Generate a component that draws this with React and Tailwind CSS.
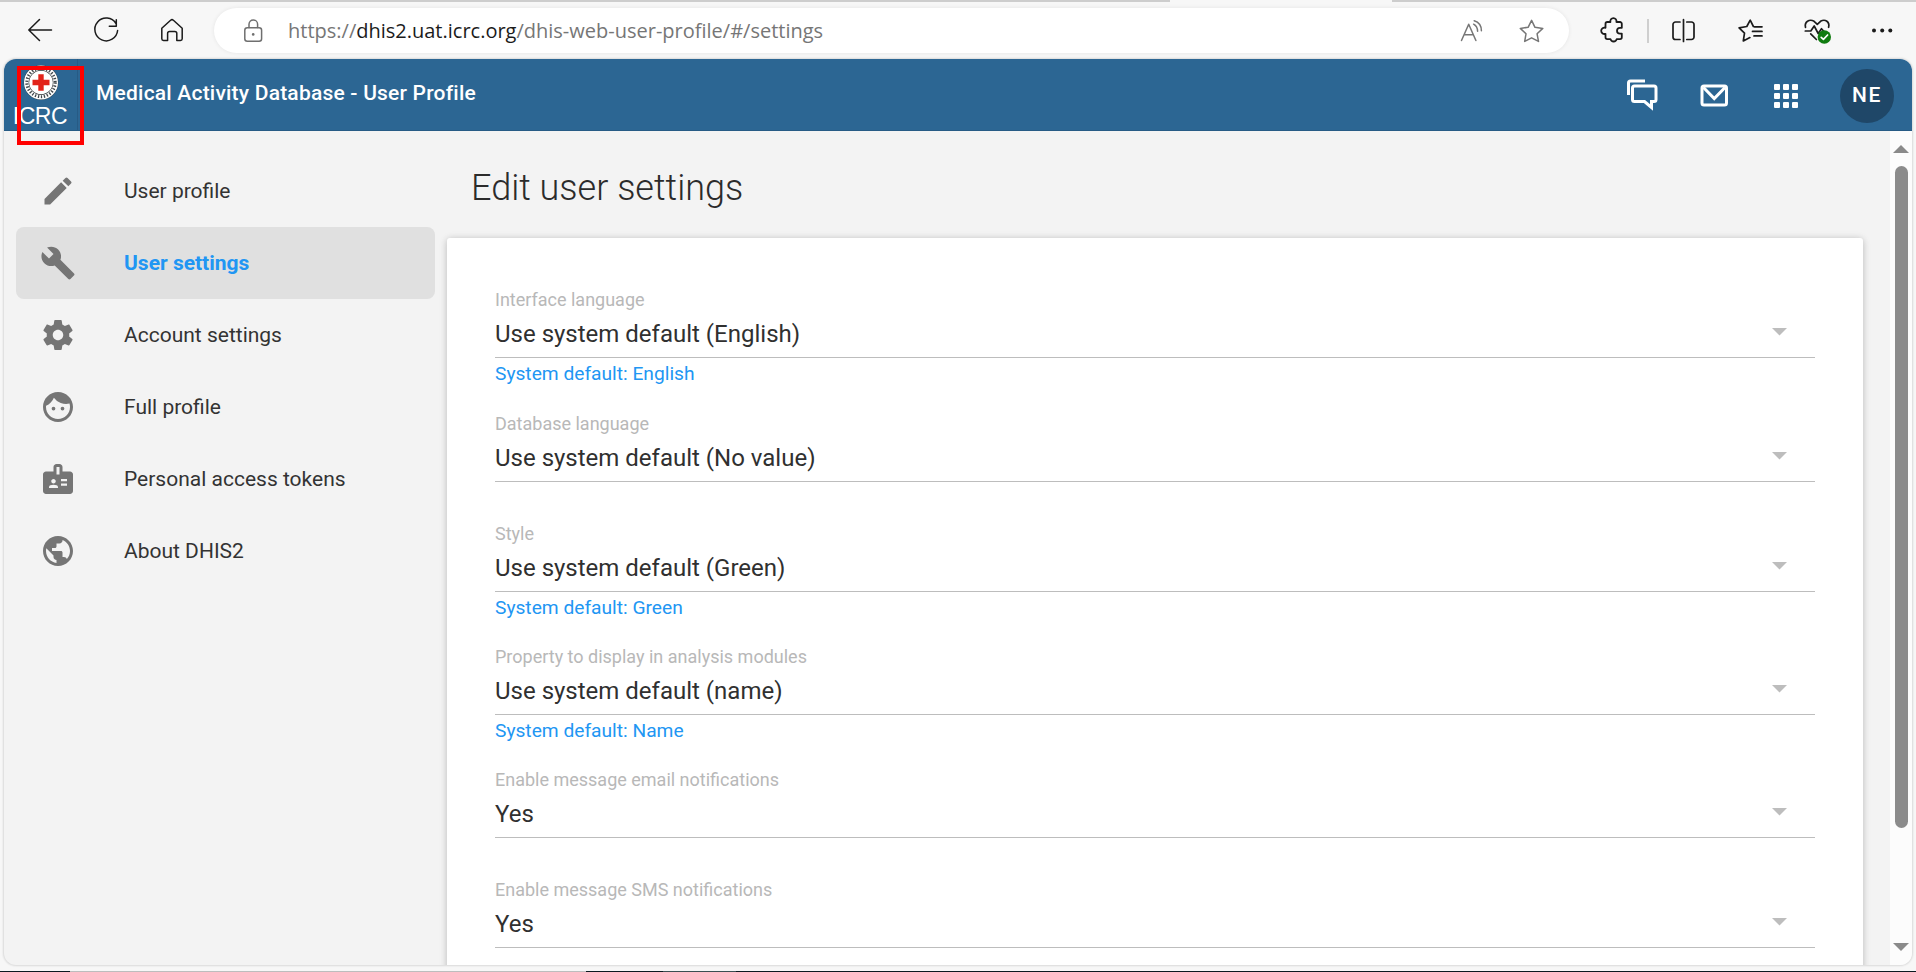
import React from "react";
import { MdEdit, MdBuild, MdFace, MdPublic } from "react-icons/md";

const Gear = (props) => (
  <svg viewBox="0 0 24 24" fill="currentColor" {...props}>
    <path d="M19.43 12.98c.04-.32.07-.64.07-.98s-.03-.66-.07-.98l2.11-1.65c.19-.15.24-.42.12-.64l-2-3.46c-.12-.22-.39-.3-.61-.22l-2.49 1c-.52-.4-1.08-.73-1.69-.98l-.38-2.65C14.46 2.18 14.25 2 14 2h-4c-.25 0-.46.18-.49.42l-.38 2.65c-.61.25-1.17.59-1.69.98l-2.49-1c-.23-.09-.49 0-.61.22l-2 3.46c-.13.22-.07.49.12.64l2.11 1.65c-.04.32-.07.65-.07.98s.03.66.07.98l-2.11 1.65c-.19.15-.24.42-.12.64l2 3.46c.12.22.39.3.61.22l2.49-1c.52.4 1.08.73 1.69.98l.38 2.65c.03.24.24.42.49.42h4c.25 0 .46-.18.49-.42l.38-2.65c.61-.25 1.17-.59 1.69-.98l2.49 1c.23.09.49 0 .61-.22l2-3.46c.12-.22.07-.49-.12-.64l-2.11-1.65zM12 15.5c-1.93 0-3.5-1.57-3.5-3.5s1.57-3.5 3.5-3.5 3.5 1.57 3.5 3.5-1.57 3.5-3.5 3.5z" />
  </svg>
);

const Badge = (props) => (
  <svg viewBox="0 0 24 24" fill="currentColor" {...props}>
    <path d="M20 7h-5V4c0-1.1-.9-2-2-2h-2c-1.1 0-2 .9-2 2v3H4c-1.1 0-2 .9-2 2v11c0 1.1.9 2 2 2h16c1.1 0 2-.9 2-2V9c0-1.1-.9-2-2-2zM9 12c.83 0 1.5.67 1.5 1.5S9.83 15 9 15s-1.5-.67-1.5-1.5S8.17 12 9 12zm3 6H6v-.43c0-.6.36-1.15.92-1.39.65-.28 1.34-.43 2.08-.43s1.43.15 2.08.43c.55.24.92.78.92 1.39V18zm1-9h-2V4h2v5zm5 7.5h-4V15h4v1.5zm0-3h-4V12h4v1.5z" />
  </svg>
);

const Line = ({ w = 30, children, className = "", sw = 1.5 }) => (
  <svg
    width={w}
    height="30"
    viewBox={`0 0 ${w} 30`}
    fill="none"
    stroke="currentColor"
    strokeWidth={sw}
    strokeLinecap="round"
    strokeLinejoin="round"
    className={`shrink-0 ${className}`}
  >
    {children}
  </svg>
);

function BrowserBar() {
  return (
    <div className="flex h-[57px] shrink-0 items-start pt-[6px] text-[#1b1b1b]">
      <Line className="ml-[25px] mt-[7px]">
        <path d="M26.500 15H3.800M14.500 4.500L3.800 15l10.700 10.500" />
      </Line>
      <Line className="ml-[36px] mt-[8px]">
        <path d="M25 7.500A11.400 11.400 0 1 0 26.600 14.500M25.300 3.700v6.500h-7" />
      </Line>
      <Line className="ml-[36px] mt-[7px]">
        <path d="M4.800 13.200L13.600 5.300a2 2 0 0 1 2.800 0l8.800 7.900v10.600a1.700 1.700 0 0 1-1.700 1.700h-3.700v-7a2 2 0 0 0-2-2h-5.200a2 2 0 0 0-2 2v7H6.500a1.700 1.700 0 0 1-1.700-1.700z" />
      </Line>
      <div className="ml-[27px] flex h-[45px] w-[1355px] items-center rounded-full bg-white shadow-[0_0_4px_rgba(0,0,0,0.08)]">
        <Line className="ml-[24px] text-[#6f6f6f]">
          <rect x="6.800" y="11.700" width="16.800" height="13.600" rx="2.500" />
          <path d="M11 11.500V8.300a4.300 4.300 0 0 1 8.600 0v3.200" />
          <circle cx="15.200" cy="18.400" r="1.300" fill="currentColor" stroke="none" />
        </Line>
        <span className="ml-[20px] w-[540px] whitespace-nowrap font-['Open_Sans',sans-serif] text-[20px] text-[#767676]">
          https://<span className="text-[#1b1b1b]">dhis2.uat.icrc.org</span>/dhis-web-user-profile/#/settings
        </span>
        <Line className="ml-[629px] text-[#767676]">
          <path d="M4.500 24.500L11.700 8.200l7.200 16.300M7.300 18.700h9M16.600 8.200c2.500 1.400 3.900 3.900 4 7M17.200 4.700c4.500 1.400 7.200 5.200 7.200 10" />
        </Line>
        <Line className="ml-[30px] text-[#767676]">
          <path d="M14.600 4.300l3.400 7 7.800 1.100-5.700 5.400 1.400 7.600-6.900-3.600-6.900 3.600L9 17.800l-5.700-5.400 7.800-1.100z" />
        </Line>
      </div>
      <Line className="ml-[28px] mt-[7px]" sw={1.8}>
        <path d="M10.300 7h3.100a3.100 3.100 0 1 1 6 0h3.600a1.800 1.800 0 0 1 1.800 1.800v4h-1.900a2.900 2.900 0 0 0 0 5.800h1.900v3.700a1.800 1.800 0 0 1-1.800 1.800h-3.300a3.200 3.200 0 0 1-6.200 0h-3.200a1.800 1.800 0 0 1-1.800-1.800v-3.500a3.200 3.200 0 1 1 0-6V8.800a1.800 1.800 0 0 1 1.800-1.800z" />
      </Line>
      <div className="ml-[20px] mt-[11px] h-[24px] w-[2px] bg-[#cfcfcf]" />
      <Line className="ml-[19px] mt-[7px]" sw={1.7}>
        <path d="M12 7H7.500A2.500 2.500 0 0 0 5 9.500v12.500A2.500 2.500 0 0 0 7.500 24.500H12M18.800 7H23.500A2.500 2.500 0 0 1 26 9.500v12.500a2.500 2.500 0 0 1-2.500 2.500h-4.700M15.500 4.700v21.800" />
      </Line>
      <Line className="ml-[37px] mt-[7px]" sw={1.7}>
        <path d="M21.600 12l-3.200-.5L15.200 5.200l-3.400 6.300-7.700 1.300 5.400 5.300-1.200 7.800 6.600-3.300M19 11.800h8M17.500 16.400h9.500M19 20.900h8" />
      </Line>
      <Line className="ml-[37px] mt-[7px]" sw={1.7}>
        <path d="M3.500 12.300c-1.300-5.300 3.800-8.800 8.600-6l3.200 3 3.200-3c4.800-2.800 9.500.7 8.100 6M3.300 16h5.500l3.400-5 4 7.500 3.300-4.800 2 2.300M8.700 18.800l5.700 5.700" />
        <circle cx="22.300" cy="22" r="6.700" fill="#107c10" stroke="none" />
        <path d="M19.200 22.300l2.200 2 4.200-4.300" stroke="#fff" />
      </Line>
      <Line className="ml-[35px] mt-[7px]">
        <g fill="currentColor" stroke="none">
          <circle cx="7" cy="15.600" r="2" />
          <circle cx="15.200" cy="15.600" r="2" />
          <circle cx="23.300" cy="15.600" r="2" />
        </g>
      </Line>
    </div>
  );
}

function Logo() {
  return (
    <div className="relative h-full w-[74px] shrink-0 border-r border-[#275b85]">
      <svg width="73" height="72" viewBox="0 0 73 72" className="block">
        <circle cx="37" cy="23.500" r="17.300" fill="#2f3437" />
        <circle cx="37" cy="23.500" r="14.700" fill="none" stroke="#fff" strokeWidth="4.600" />
        <circle cx="37" cy="23.500" r="14.200" fill="none" stroke="#41474b" strokeWidth="3" strokeDasharray="1.300 1.700" />
        <circle cx="37" cy="23.500" r="11.800" fill="#fff" />
        <path d="M34.300 15.200h5.400v5.600h5.800v5.400h-5.800v5.600h-5.400v-5.600h-5.800v-5.400h5.800z" fill="#e2231a" />
        <text x="8.700" y="65" fontSize="23" textLength="55" fill="#fff" className="font-['Liberation_Sans',sans-serif]">
          ICRC
        </text>
      </svg>
      <div className="absolute left-[13px] top-[7px] z-10 h-[79px] w-[67px] border-4 border-[#ff0000]" />
    </div>
  );
}

function HeaderBar() {
  return (
    <header className="flex h-[72px] shrink-0 items-center bg-[#2c6693] text-white shadow-[inset_0_-1px_0_#275b85]">
      <Logo />
      <h1 className="ml-[18px] mb-[2px] whitespace-nowrap text-[21px] font-medium tracking-[0.21px]">
        Medical Activity Database - User Profile
      </h1>
      <div className="ml-auto flex items-center pt-[2px]">
        <svg width="36" height="36" viewBox="0 0 36 36" fill="none" stroke="#fff" strokeWidth="3">
          <path d="M4.500 17V5a2 2 0 0 1 2-2H21" />
          <path d="M10.500 8h19.500a2 2 0 0 1 2 2v11.500a2 2 0 0 1-2 2h-2.500v6l-7-6H10.500a2 2 0 0 1-2-2V10a2 2 0 0 1 2-2z" />
        </svg>
        <svg width="36" height="36" viewBox="0 0 36 36" fill="none" stroke="#fff" strokeWidth="3" className="ml-[36px]">
          <rect x="6" y="8" width="24.500" height="19" rx="2" />
          <path d="M7.500 9.500L18.250 20.500 29 9.500" />
        </svg>
        <svg width="36" height="36" viewBox="0 0 36 36" fill="#fff" className="ml-[36px]">
          {[6, 15, 24].map((y) =>
            [6, 15, 24].map((x) => <rect key={`${x}-${y}`} x={x} y={y} width="6" height="6" rx="1" />)
          )}
        </svg>
        <div className="ml-[36px] mr-[18px] flex size-[54px] items-center justify-center rounded-full bg-[#1f4768] text-[21px] font-medium tracking-[1.5px]">
          NE
        </div>
      </div>
    </header>
  );
}

const items = [
  { label: "User profile", Icon: MdEdit },
  { label: "User settings", Icon: MdBuild, active: true },
  { label: "Account settings", Icon: Gear },
  { label: "Full profile", Icon: MdFace },
  { label: "Personal access tokens", Icon: Badge },
  { label: "About DHIS2", Icon: MdPublic },
];

function Sidebar() {
  return (
    <nav className="w-[431px] shrink-0 pl-[12px] pt-[24px]">
      {items.map(({ label, Icon, active }) => (
        <div
          key={label}
          className={`flex h-[72px] items-center rounded-[8px] pl-[24px] ${active ? "bg-[#e0e0e0]" : ""}`}
        >
          <Icon className="size-[36px] text-[#757575]" />
          <span
            className={`ml-[48px] pt-[1px] text-[21px] ${active ? "font-bold text-[#2196f3]" : "font-normal text-[#333]"}`}
          >
            {label}
          </span>
        </div>
      ))}
    </nav>
  );
}

function Field({ label, value, hint }) {
  return (
    <div className={hint ? "h-[123.3px]" : "h-[110px]"}>
      <div className="h-[72px] border-b border-[#bdbdbd]">
        <div className="h-[27px] text-[18px] leading-[27px] text-[#b8b8b8]">{label}</div>
        <div className="flex h-[42px] items-center justify-between">
          <span className="text-[24px] text-[#303030]">{value}</span>
          <svg width="15" height="8" viewBox="0 0 15 8" className="mb-[4px] mr-[28px]">
            <path d="M0 0h15L7.500 7.500z" fill="#bdbdbd" />
          </svg>
        </div>
      </div>
      {hint && <div className="pt-[2px] text-[19.2px] leading-[27px] text-[#2196f3]">{hint}</div>}
    </div>
  );
}

function Settings() {
  return (
    <main className="flex min-w-0 flex-1 flex-col pl-[12px] pr-[27px]">
      <h2 className="h-[107px] shrink-0 pl-[24px] pt-[30px] text-[36px] font-light leading-[54px] text-[#2b2b2b]">
        Edit user settings
      </h2>
      <div className="flex-1 rounded-t-[3px] bg-white px-[48px] pt-[48.25px] shadow-[0_1px_9px_rgba(0,0,0,0.12),0_1px_6px_rgba(0,0,0,0.12)]">
        <Field label="Interface language" value="Use system default (English)" hint="System default: English" />
        <Field label="Database language" value="Use system default (No value)" />
        <Field label="Style" value="Use system default (Green)" hint="System default: Green" />
        <Field label="Property to display in analysis modules" value="Use system default (name)" hint="System default: Name" />
        <Field label="Enable message email notifications" value="Yes" />
        <Field label="Enable message SMS notifications" value="Yes" />
      </div>
    </main>
  );
}

function Scrollbar() {
  return (
    <div className="flex w-[22px] shrink-0 flex-col items-center bg-[#fcfcfc]">
      <svg width="16" height="8" viewBox="0 0 16 8" className="mt-[14px] shrink-0">
        <path d="M0 8h16L8 0z" fill="#8a8a8a" />
      </svg>
      <div className="mt-[13px] h-[662px] w-[13px] shrink-0 rounded-full bg-[#8b8b8b]" />
      <svg width="16" height="8" viewBox="0 0 16 8" className="mb-[14px] mt-auto shrink-0">
        <path d="M0 0h16L8 8z" fill="#8a8a8a" />
      </svg>
    </div>
  );
}

export default function App() {
  return (
    <div className="flex h-[972px] w-[1916px] flex-col overflow-hidden bg-[#f7f7f7] font-['Roboto',sans-serif]">
      <div className="flex h-[2px] shrink-0">
        <div className="w-[1170px] bg-[#cdcdcd]" />
        <div className="w-[222px]" />
        <div className="flex-1 bg-[#cdcdcd]" />
      </div>
      <BrowserBar />
      <div className="ml-[4px] flex h-[906px] w-[1908px] shrink-0 flex-col overflow-hidden rounded-[12px] bg-[#f3f3f3] shadow-[0_0_2px_1px_rgba(0,0,0,0.12)]">
        <HeaderBar />
        <div className="flex min-h-0 flex-1">
          <Sidebar />
          <Settings />
          <Scrollbar />
        </div>
      </div>
      <div className="mt-auto flex h-px shrink-0 bg-[#0b1a20]">
        <div className="ml-[70px] w-[516px] bg-[#bdbdbd]" />
        <div className="ml-[77px] w-[73px] bg-[#3b4f52]" />
      </div>
    </div>
  );
}
